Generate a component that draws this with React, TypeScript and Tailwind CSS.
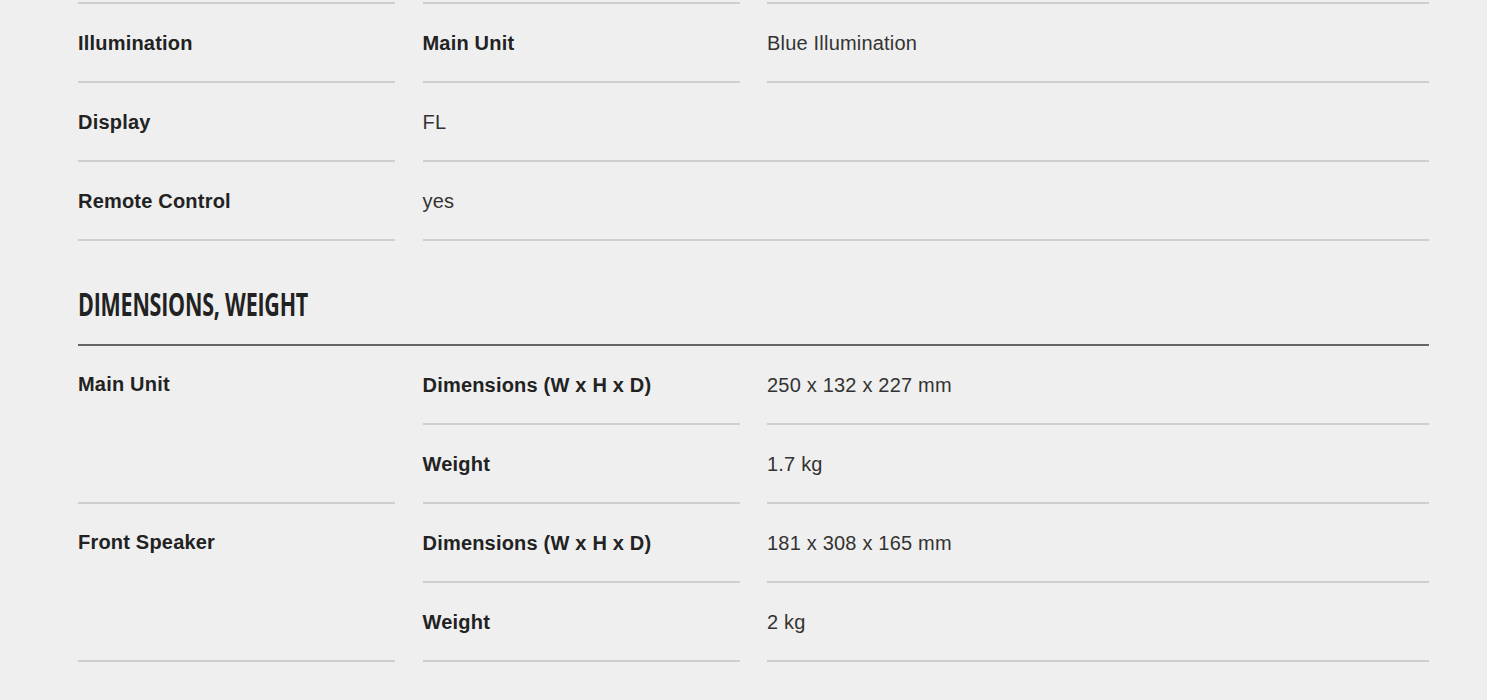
type Row = { label: string; sub?: string; value: string };

const section1: Row[] = [
  { label: "Illumination", sub: "Main Unit", value: "Blue Illumination" },
  { label: "Display", value: "FL" },
  { label: "Remote Control", value: "yes" },
];

const section2 = [
  {
    label: "Main Unit",
    items: [
      { sub: "Dimensions (W x H x D)", value: "250 x 132 x 227 mm" },
      { sub: "Weight", value: "1.7 kg" },
    ],
  },
  {
    label: "Front Speaker",
    items: [
      { sub: "Dimensions (W x H x D)", value: "181 x 308 x 165 mm" },
      { sub: "Weight", value: "2 kg" },
    ],
  },
];

const cell = "flex items-center border-b-2 border-[#cfcfcf] text-[20px] tracking-[0.2px]";

export default function App() {
  return (
    <div className="min-h-[700px] bg-[#efefef] pt-[2px] text-[#222] font-['Liberation_Sans',Arial,sans-serif]">
      <div className="ml-[78px] w-[1351px]">
        {/* specs */}
        <div className="grid grid-cols-[317px_317px_1fr] gap-x-[27.5px]">
          {section1.map((r, i) => {
            const h = i === 0 ? "h-[81px] border-t-2" : "h-[79px]";
            return (
              <div key={i} className="contents">
                <div className={`${cell} ${h} font-bold`}>{r.label}</div>
                {r.sub ? (
                  <>
                    <div className={`${cell} ${h} font-bold`}>{r.sub}</div>
                    <div className={`${cell} ${h} text-[#333]`}>{r.value}</div>
                  </>
                ) : (
                  <div className={`${cell} ${h} col-span-2 text-[#333]`}>{r.value}</div>
                )}
              </div>
            );
          })}
        </div>

        {/* heading */}
        <div className="pt-[45px] pb-[21px] border-b-2 border-[#666]">
          <h2 className="inline-block origin-left scale-x-[0.67] text-[32px] font-bold uppercase leading-[36px] tracking-[-0.3px] whitespace-nowrap font-['Open_Sans','DejaVu_Sans',sans-serif]">
            Dimensions, Weight
          </h2>
        </div>

        <div className="grid grid-cols-[317px_317px_1fr] gap-x-[27.5px]">
          {section2.map((g, gi) => (
            <div key={gi} className="contents">
              <div className="row-span-2 border-b-2 border-[#cfcfcf] pt-[26px] text-[20px] font-bold leading-[24px] tracking-[0.2px]">
                {g.label}
              </div>
              {g.items.map((it, ii) => (
                <div key={ii} className="contents">
                  <div className={`${cell} h-[79px] font-bold`}>{it.sub}</div>
                  <div className={`${cell} h-[79px] text-[#333]`}>{it.value}</div>
                </div>
              ))}
            </div>
          ))}
        </div>
      </div>
    </div>
  );
}
